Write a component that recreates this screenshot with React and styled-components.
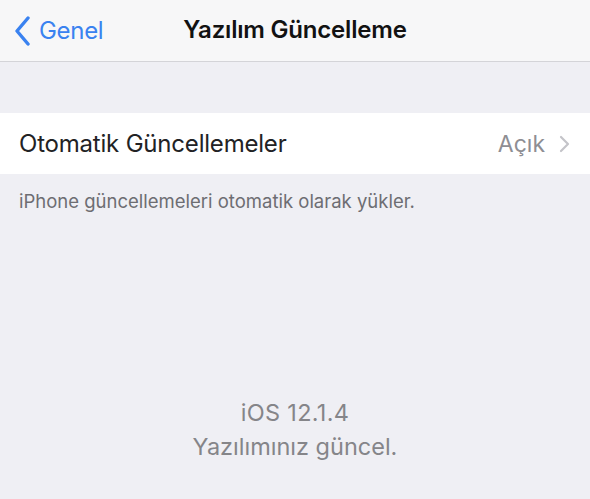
import React from 'react';
import styled, { createGlobalStyle } from 'styled-components';

const GlobalStyle = createGlobalStyle`
  html, body {
    margin: 0;
    padding: 0;
    background: #efeff4;
  }
  body {
    font-family: Inter, "Noto Sans", sans-serif;
    -webkit-font-smoothing: antialiased;
  }
`;

const Screen = styled.div`
  width: 590px;
  height: 499px;
  display: flex;
  flex-direction: column;
  background: #efeff4;
  overflow: hidden;
`;

const NavBar = styled.header`
  height: 61px;
  flex-shrink: 0;
  display: grid;
  grid-template-columns: 1fr auto 1fr;
  align-items: center;
  background: #f7f7f8;
  border-bottom: 1px solid #d4d4d8;
`;

const BackButton = styled.button`
  justify-self: start;
  display: flex;
  align-items: center;
  gap: 8px;
  padding: 0 0 0 14px;
  border: 0;
  background: none;
  color: #3a82f0;
  font-family: inherit;
  font-size: 24px;
  letter-spacing: -0.3px;
  cursor: pointer;
`;

const Title = styled.h1`
  margin: 0 0 2px;
  font-size: 24px;
  font-weight: 600;
  letter-spacing: -0.2px;
  color: #121212;
`;

const Group = styled.section`
  margin-top: 51px;
  background: #fff;
`;

const Row = styled.div`
  height: 61px;
  display: flex;
  align-items: center;
  padding: 0 20px 0 19px;
`;

const RowLabel = styled.span`
  flex: 1;
  font-size: 24px;
  letter-spacing: -0.2px;
  color: #222224;
`;

const RowValue = styled.span`
  display: flex;
  align-items: center;
  gap: 14px;
  font-size: 23px;
  color: #8e8e93;
`;

const Footnote = styled.p`
  margin: 16px 0 0 19px;
  font-size: 18.5px;
  line-height: 22px;
  color: #6d6d72;
`;

const Status = styled.div`
  margin-top: auto;
  margin-bottom: 36px;
  display: flex;
  flex-direction: column;
  align-items: center;
  font-size: 23.5px;
  line-height: 33px;
  color: #858589;
`;

const Version = styled.span`
  letter-spacing: 0.3px;
  margin-bottom: 1px;
`;

const BackChevron = () => (
  <svg width="17" height="30" viewBox="0 0 17 30" fill="none">
    <path d="M14 2 L3 15 L14 28" stroke="currentColor" strokeWidth="3.4" strokeLinecap="round" strokeLinejoin="round" />
  </svg>
);

const Disclosure = () => (
  <svg width="11" height="18" viewBox="0 0 11 18" fill="none">
    <path d="M2 2 L9 9 L2 16" stroke="#c4c4c9" strokeWidth="2.2" strokeLinecap="round" strokeLinejoin="round" />
  </svg>
);

export default function App() {
  return (
    <Screen>
      <GlobalStyle />
      <NavBar>
        <BackButton>
          <BackChevron />
          Genel
        </BackButton>
        <Title>Yazılım Güncelleme</Title>
        <span />
      </NavBar>
      <Group>
        <Row>
          <RowLabel>Otomatik Güncellemeler</RowLabel>
          <RowValue>
            Açık
            <Disclosure />
          </RowValue>
        </Row>
      </Group>
      <Footnote>iPhone güncellemeleri otomatik olarak yükler.</Footnote>
      <Status>
        <Version>iOS 12.1.4</Version>
        <span>Yazılımınız güncel.</span>
      </Status>
    </Screen>
  );
}
